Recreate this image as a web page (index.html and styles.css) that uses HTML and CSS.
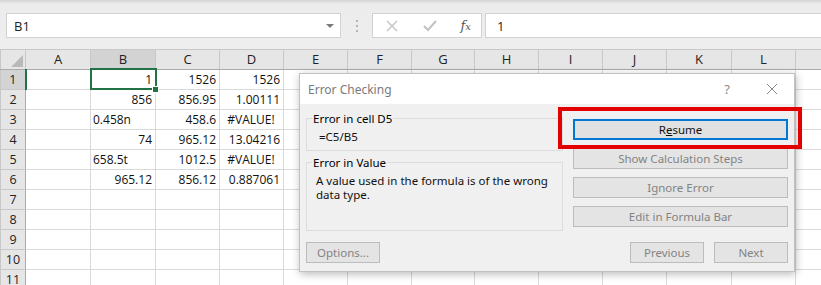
FILE: index.html
```html
<!DOCTYPE html>
<html>
<head>
	<title>Error Checking</title>
	<link rel="stylesheet" href="styles.css">
</head>
<body>
	<div class="formula-bar">
		<div class="name-box">
			<span>B1</span>
			<span class="caret"></span>
		</div>
		<div class="grip"><i></i><i></i><i></i></div>
		<div class="fx-buttons">
			<svg width="14" height="14" viewBox="0 0 14 14">
				<path d="M2 2 L12 12 M12 2 L2 12" stroke="#c2c2c2" stroke-width="1.3" fill="none" />
			</svg>
			<svg width="16" height="14" viewBox="0 0 16 14">
				<path d="M2 7 L6 11 L14 2" stroke="#c2c2c2" stroke-width="2" fill="none" />
			</svg>
			<span class="fx">f<small>x</small></span>
		</div>
		<div class="formula-input">1</div>
	</div>

	<table class="sheet">
		<colgroup>
			<col class="w-row"><col class="w65"><col class="w65"><col class="w64"><col class="w64">
			<col class="w64"><col class="w64"><col class="w63"><col class="w64"><col class="w64">
			<col class="w64"><col class="w65"><col class="w64"><col class="w64">
		</colgroup>
		<tr class="head">
			<th class="corner"><span class="tri"></span></th>
			<th>A</th><th class="sel">B</th><th>C</th><th>D</th><th>E</th><th>F</th>
			<th>G</th><th>H</th><th>I</th><th>J</th><th>K</th><th>L</th><th></th>
		</tr>
		<tr>
			<th class="sel-row">1</th><td></td><td class="active">1<span class="handle"></span></td>
			<td>1526</td><td>1526</td><td></td><td></td><td></td><td></td><td></td><td></td><td></td><td></td><td></td>
		</tr>
		<tr>
			<th>2</th><td></td><td>856</td><td>856.95</td><td>1.00111</td>
			<td></td><td></td><td></td><td></td><td></td><td></td><td></td><td></td><td></td>
		</tr>
		<tr>
			<th>3</th><td></td><td class="txt">0.458n</td><td>458.6</td><td class="err">#VALUE!</td>
			<td></td><td></td><td></td><td></td><td></td><td></td><td></td><td></td><td></td>
		</tr>
		<tr>
			<th>4</th><td></td><td>74</td><td>965.12</td><td>13.04216</td>
			<td></td><td></td><td></td><td></td><td></td><td></td><td></td><td></td><td></td>
		</tr>
		<tr>
			<th>5</th><td></td><td class="txt">658.5t</td><td>1012.5</td><td class="err">#VALUE!</td>
			<td></td><td></td><td></td><td></td><td></td><td></td><td></td><td></td><td></td>
		</tr>
		<tr>
			<th>6</th><td></td><td>965.12</td><td>856.12</td><td>0.887061</td>
			<td></td><td></td><td></td><td></td><td></td><td></td><td></td><td></td><td></td>
		</tr>
		<tr>
			<th>7</th><td></td><td></td><td></td><td></td><td></td><td></td><td></td><td></td><td></td><td></td><td></td><td></td><td></td>
		</tr>
		<tr>
			<th>8</th><td></td><td></td><td></td><td></td><td></td><td></td><td></td><td></td><td></td><td></td><td></td><td></td><td></td>
		</tr>
		<tr>
			<th>9</th><td></td><td></td><td></td><td></td><td></td><td></td><td></td><td></td><td></td><td></td><td></td><td></td><td></td>
		</tr>
		<tr>
			<th>10</th><td></td><td></td><td></td><td></td><td></td><td></td><td></td><td></td><td></td><td></td><td></td><td></td><td></td>
		</tr>
		<tr>
			<th>11</th><td></td><td></td><td></td><td></td><td></td><td></td><td></td><td></td><td></td><td></td><td></td><td></td><td></td>
		</tr>
	</table>

	<!-- dialog window floats over the sheet -->
	<div class="dialog">
		<div class="title-bar">
			<span class="title">Error Checking</span>
			<span class="help">?</span>
			<svg class="close" width="12" height="12" viewBox="0 0 12 12">
				<path d="M1 1 L11 11 M11 1 L1 11" stroke="#8a8a8a" stroke-width="1" fill="none" />
			</svg>
		</div>
		<div class="dialog-body">
			<div class="info">
				<fieldset class="group cell-group">
					<legend>Error in cell D5</legend>
					<div class="formula">=C5/B5</div>
				</fieldset>
				<fieldset class="group value-group">
					<legend>Error in Value</legend>
					<div class="message">A value used in the formula is of the wrong data type.</div>
				</fieldset>
			</div>
			<div class="actions">
				<button class="btn default">R<u>e</u>sume</button>
				<button class="btn" disabled>Show Calculation Steps</button>
				<button class="btn" disabled>Ignore Error</button>
				<button class="btn" disabled>Edit in Formula Bar</button>
			</div>
		</div>
		<div class="dialog-foot">
			<button class="btn small" disabled>Options...</button>
			<div class="nav">
				<button class="btn small" disabled>Previous</button>
				<button class="btn small" disabled>Next</button>
			</div>
		</div>
	</div>

	<!-- red highlight annotation -->
	<div class="callout"></div>
</body>
</html>
```

FILE: styles.css
```css
body {
	margin: 0;
	width: 821px;
	height: 285px;
	overflow: hidden;
	position: relative;
	background: #fff;
	font-family: "Open Sans", "Liberation Sans", sans-serif;
}

/* formula bar */

.formula-bar {
	display: flex;
	align-items: flex-start;
	height: 49px;
	box-sizing: border-box;
	padding-top: 13px;
	background: linear-gradient(#d4d4d4, #ececec 4px, #eeeeee);
}

.name-box {
	display: flex;
	align-items: center;
	justify-content: space-between;
	box-sizing: border-box;
	width: 335px;
	height: 25px;
	margin-left: 6px;
	padding: 0 6px 0 7px;
	background: #fff;
	border: 1px solid #d2d2d2;
	font-size: 13px;
	color: #222;
}

.caret {
	width: 0;
	height: 0;
	border-left: 4px solid transparent;
	border-right: 4px solid transparent;
	border-top: 4px solid #7b7b7b;
}

.grip {
	display: flex;
	flex-direction: column;
	align-items: center;
	gap: 3px;
	width: 31px;
	padding-top: 7px;
}

.grip i {
	width: 2px;
	height: 2px;
	background: #b4b4b4;
}

.fx-buttons {
	display: flex;
	align-items: center;
	justify-content: space-between;
	box-sizing: border-box;
	width: 110px;
	height: 25px;
	padding: 0 10px 0 12px;
	background: #fff;
	border: 1px solid #d2d2d2;
}

.fx {
	font-family: "DejaVu Serif", "Liberation Serif", serif;
	font-style: italic;
	font-size: 13px;
	color: #555;
}

.fx small {
	font-size: 10px;
}

.formula-input {
	flex: 1;
	box-sizing: border-box;
	height: 25px;
	margin: 0 -2px 0 3px;
	padding: 3px 11px;
	background: #fff;
	border: 1px solid #d2d2d2;
	font-size: 13px;
	color: #222;
}

/* sheet grid */

.sheet {
	border-collapse: collapse;
	table-layout: fixed;
	width: 859px;
	font-size: 12px;
	color: #111;
}

.w-row { width: 25px; }
.w63 { width: 63px; }
.w64 { width: 64px; }
.w65 { width: 65px; }

.sheet tr {
	height: 20px;
}

.sheet tr.head {
	height: 19px;
}

.sheet td {
	padding: 0 3px 0 2px;
	border: 1px solid #dadada;
	text-align: right;
	white-space: nowrap;
	overflow: visible;
}

.sheet td.txt {
	text-align: left;
}

.sheet td.err {
	text-align: center;
}

.sheet th {
	padding: 0;
	background: #e6e6e6;
	border: 1px solid #c8c8c8;
	border-bottom-color: #ababab;
	font-weight: normal;
	font-size: 13px;
	color: #222;
}

.sheet tr + tr th {
	border-bottom-color: #c8c8c8;
	border-right-color: #ababab;
	font-size: 12.5px;
}

.sheet th.sel {
	background: #d3d3d3;
	border-bottom: 2px solid #217346;
}

.sheet tr + tr th.sel-row {
	background: #d3d3d3;
	border-right: 2px solid #217346;
}

.corner {
	position: relative;
}

.tri {
	position: absolute;
	right: 2px;
	bottom: 2px;
	width: 0;
	height: 0;
	border-left: 12px solid transparent;
	border-bottom: 12px solid #b9b9b9;
}

.sheet td.active {
	position: relative;
	outline: 2px solid #217346;
	outline-offset: -1px;
}

.handle {
	position: absolute;
	right: -4px;
	bottom: -4px;
	width: 5px;
	height: 5px;
	background: #217346;
	border: 1px solid #fff;
}

/* error checking dialog */

.dialog {
	position: absolute;
	left: 299px;
	top: 73px;
	width: 496px;
	height: 199px;
	box-sizing: border-box;
	display: flex;
	flex-direction: column;
	background: #f0f0f0;
	border: 1px solid #c2c2c2;
	box-shadow: 1px 2px 8px rgba(0, 0, 0, 0.28);
	font-family: "Noto Sans", "Open Sans", sans-serif;
	font-size: 11.5px;
	color: #111;
}

.title-bar {
	display: flex;
	align-items: center;
	height: 30px;
	padding: 0 16px 0 8px;
	background: #fff;
}

.title {
	flex: 1;
	font-size: 12px;
	color: #7a7a7a;
}

.help {
	margin-right: 36px;
	font-size: 13px;
	color: #8a8a8a;
}

.dialog-body {
	display: flex;
	justify-content: space-between;
	padding: 7px 6px 0 6px;
}

.info {
	display: flex;
	flex-direction: column;
	gap: 4px;
	width: 257px;
}

.group {
	margin: 0;
	padding: 0 4px 0 5px;
	border: 1px solid #dcdcdc;
}

.group legend {
	padding: 0 1px;
	color: #000;
}

.cell-group {
	height: 40px;
	box-sizing: border-box;
}

.formula {
	padding: 3px 0 0 7px;
}

.value-group {
	height: 76px;
	box-sizing: border-box;
}

.message {
	padding: 4px 4px 0 4px;
	line-height: 14px;
}

.actions {
	display: flex;
	flex-direction: column;
	gap: 8px;
	width: 215px;
	padding-top: 8px;
}

.btn {
	height: 21px;
	padding: 0;
	box-sizing: border-box;
	background: #e1e1e1;
	border: 1px solid #adadad;
	font-family: inherit;
	font-size: 11.5px;
	color: #111;
}

.btn:disabled {
	color: #838383;
	background: #e4e4e4;
	border-color: #bcbcbc;
}

.btn.default {
	border: 2px solid #0078d7;
}

.dialog-foot {
	display: flex;
	justify-content: space-between;
	align-items: flex-end;
	margin-top: auto;
	padding: 0 6px 8px 6px;
}

.btn.small {
	width: 74px;
}

.nav {
	display: flex;
	gap: 10px;
}

.callout {
	position: absolute;
	left: 558px;
	top: 107px;
	width: 244px;
	height: 42px;
	box-sizing: border-box;
	border: 4px solid #e30000;
}
```
